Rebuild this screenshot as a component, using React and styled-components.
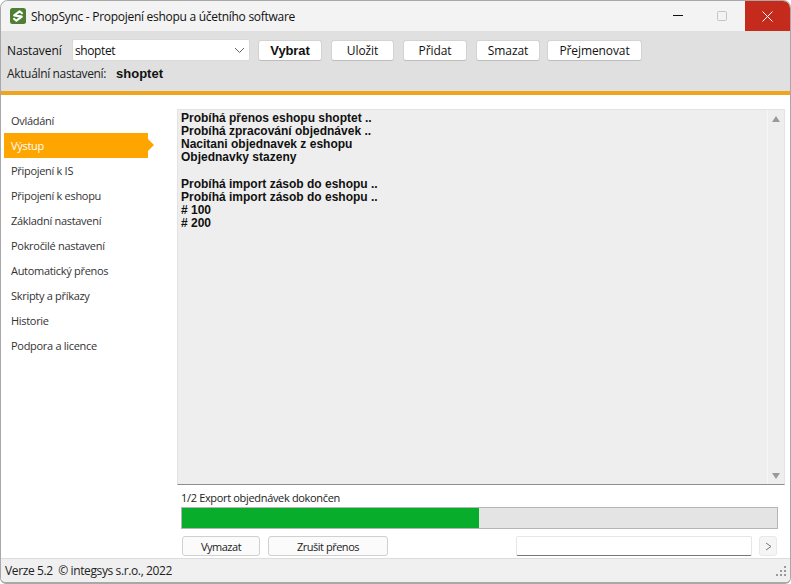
import React from "react";
import styled, { createGlobalStyle } from "styled-components";

const Global = createGlobalStyle`
  html, body { margin: 0; padding: 0; background: #fff; }
  body { font-family: "Open Sans", "Liberation Sans", sans-serif; font-size: 12px; color: #1a1a1a; }
  * { box-sizing: border-box; }
`;

const Window = styled.div`
  width: 791px; height: 584px; display: flex; flex-direction: column;
  border: 1px solid #a8a8a8; border-bottom-width: 2px; border-radius: 8px 8px 6px 6px; overflow: hidden; background: #fff;
`;
const TitleBar = styled.div`
  height: 30px; flex: none; background: #f3f3f3; display: flex; align-items: center; padding-left: 9px;
`;
const Logo = styled.svg`width: 16px; height: 16px; flex: none; margin-right: 5px;`;
const Title = styled.div`font-size: 12px; letter-spacing: -0.28px; color: #111; flex: 1; white-space: nowrap;`;
const WinButton = styled.div`
  width: 45px; height: 30px; display: flex; align-items: center; justify-content: center;
  padding-right: ${p => p.$pad || 0}px;
  background: ${p => (p.$close ? "#c42b1c" : "transparent")};
`;
const Toolbar = styled.div`
  height: 60px; flex: none; background: #e0e0e0; padding: 8px 0 0 6px; display: flex; flex-direction: column;
`;
const ToolRow = styled.div`display: flex; align-items: center; height: 22px;`;
const Label = styled.span`font-size: 12px; letter-spacing: -0.1px; color: #111; width: 65px; flex: none;`;
const Select = styled.div`
  width: 178px; height: 22px; background: #fff; border: 1px solid #d9d9d9; border-radius: 2px;
  display: flex; align-items: center; justify-content: space-between; padding: 0 4px 0 2px; font-size: 12px; letter-spacing: -0.4px; color: #111;
  margin-right: 8px;
`;
const ToolButton = styled.div`
  height: 21px; width: ${p => p.$w}px; margin-right: ${p => p.$gap}px; flex: none; background: #fff;
  border: 1px solid #d3d3d3; border-bottom-color: #bdbdbd; border-radius: 3px;
  display: flex; align-items: center; justify-content: center; color: #111;
  font-size: ${p => (p.$bold ? 13 : 12)}px;
  font-weight: ${p => (p.$bold ? 700 : 400)}; letter-spacing: -0.1px;
  font-family: ${p => (p.$bold ? '"Liberation Sans", sans-serif' : "inherit")};
`;
const Current = styled.div`display: flex; align-items: center; height: 22px; margin-top: 1px; font-size: 12px; letter-spacing: -0.35px; color: #222;`;
const CurrentValue = styled.b`font-family: "Liberation Sans", sans-serif; font-size: 13px; margin-left: 10px; color: #111; letter-spacing: 0;`;
const Accent = styled.div`height: 4px; flex: none; background: #f0a51e;`;
const Main = styled.div`flex: 1; display: flex; min-height: 0; background: #fff;`;
const Side = styled.div`width: 176px; flex: none; padding: 13px 0 0 3px;`;
const NavItem = styled.div`
  position: relative; width: 144px; height: 25px; display: flex; align-items: center; padding-left: 7px;
  font-size: 11px; letter-spacing: -0.3px; color: ${p => (p.$active ? "#fff" : "#333")};
  background: ${p => (p.$active ? "#ffa500" : "transparent")};
  ${p => p.$active && `&::after { content: ""; position: absolute; left: 144px; top: 6px;
    border-left: 6px solid #ffa500; border-top: 6px solid transparent; border-bottom: 6px solid transparent; }`}
`;
const Content = styled.div`flex: 1; display: flex; flex-direction: column; min-width: 0; padding: 14px 5px 0 0;`;
const Output = styled.div`
  height: 376px; flex: none; display: flex; background: #eeeeee;
  border: 1px solid #e3e3e3; border-bottom: 1px solid #8d8d8d; margin-bottom: 6px;
`;
const OutputText = styled.div`
  flex: 1; padding: 2px 3px; font-family: "Liberation Sans", sans-serif; font-weight: 700; font-size: 12px;
  line-height: 13px; color: #111; white-space: pre;
`;
const OutputBlock = styled.div`margin-bottom: 14px;`;
const Scroll = styled.div`
  width: 17px; flex: none; border-left: 1px solid #f6f6f6; display: flex; flex-direction: column;
  justify-content: space-between; align-items: center; padding: 6px 0 5px;
`;
const Arrow = styled.div`
  width: 0; height: 0; border-left: 4.5px solid transparent; border-right: 4.5px solid transparent;
  ${p => (p.$down ? "border-top: 6px solid #9a9a9a;" : "border-bottom: 6px solid #9a9a9a;")}
`;
const ProgressLabel = styled.div`height: 16px; font-size: 11px; line-height: 14px; letter-spacing: -0.33px; padding-left: 4px; color: #222;`;
const ProgressTrack = styled.div`
  height: 22px; width: 597px; margin-left: 4px; background: #e4e4e4; border: 1px solid #b5b5b5; flex: none;
`;
const ProgressFill = styled.div`height: 100%; background: #08ad2b;`;
const Controls = styled.div`display: flex; align-items: center; margin-top: 7px; padding-left: 5px; height: 20px;`;
const LowButton = styled.div`
  width: ${p => p.$w}px; margin-right: 8px; height: 20px; background: #fbfbfb; border: 1px solid #d0d0d0; border-radius: 3px;
  display: flex; align-items: center; justify-content: center; font-size: 11px; letter-spacing: -0.48px; color: #222; flex: none;
`;
const Input = styled.div`
  width: 236px; height: 20px; margin-left: 120px; background: #fff; border: 1px solid #e6e6e6; border-bottom: 1px solid #777; border-radius: 2px; flex: none;
`;
const NextButton = styled.div`
  width: 18px; height: 20px; margin-left: 7px; background: #f5f5f5; border: 1px solid #e8e8e8; border-radius: 3px;
  display: flex; align-items: center; justify-content: center; flex: none;
`;
const Status = styled.div`
  height: 24px; flex: none; background: #f0f0f0; border-top: 1px solid #dcdcdc; display: flex; align-items: center;
  justify-content: space-between; padding: 0 3px 0 4px; font-size: 12px; letter-spacing: -0.38px; color: #222;
`;
const StatusText = styled.span`white-space: pre;`;

const nav = ["Ovládání", "Výstup", "Připojení k IS", "Připojení k eshopu", "Základní nastavení", "Pokročilé nastavení", "Automatický přenos", "Skripty a příkazy", "Historie", "Podpora a licence"];
const blockA = `Probíhá přenos eshopu shoptet ..
Probíhá zpracování objednávek ..
Nacitani objednavek z eshopu
Objednavky stazeny`;
const blockB = `Probíhá import zásob do eshopu ..
Probíhá import zásob do eshopu ..
# 100
# 200`;

export default function App() {
  return (
    <>
      <Global />
      <Window>
        <TitleBar>
          <Logo viewBox="0 0 16 16">
            <rect width="16" height="16" rx="2.5" fill="#4f7f35" />
            <path d="M12 5.2 9.6 3.3 4.2 7.4 11.8 8.6 6.4 12.7 4 10.8" fill="none" stroke="#fff" strokeWidth="2.1" strokeLinejoin="round" strokeLinecap="round" />
          </Logo>
          <Title>ShopSync - Propojení eshopu a účetního software</Title>
          <WinButton>
            <svg width="10" height="10" viewBox="0 0 10 10"><path d="M0 4.5h10" stroke="#111" strokeWidth="1" /></svg>
          </WinButton>
          <WinButton $pad={2}>
            <svg width="10" height="10" viewBox="0 0 10 10"><rect x=".5" y=".5" width="9" height="9" rx="1" fill="none" stroke="#c4c4c4" /></svg>
          </WinButton>
          <WinButton $close>
            <svg width="11" height="11" viewBox="0 0 11 11"><path d="M.5.5l10 10M10.5.5l-10 10" stroke="#fff" strokeWidth="1" /></svg>
          </WinButton>
        </TitleBar>
        <Toolbar>
          <ToolRow>
            <Label>Nastavení</Label>
            <Select>
              shoptet
              <svg width="11" height="7" viewBox="0 0 11 7"><path d="M1 1l4.5 4.5L10 1" fill="none" stroke="#666" /></svg>
            </Select>
            <ToolButton $w={64} $gap={9} $bold>Vybrat</ToolButton>
            <ToolButton $w={63} $gap={9}>Uložit</ToolButton>
            <ToolButton $w={64} $gap={9}>Přidat</ToolButton>
            <ToolButton $w={64} $gap={7}>Smazat</ToolButton>
            <ToolButton $w={95} $gap={0}>Přejmenovat</ToolButton>
          </ToolRow>
          <Current>Aktuální nastavení:<CurrentValue>shoptet</CurrentValue></Current>
        </Toolbar>
        <Accent />
        <Main>
          <Side>
            {nav.map(n => <NavItem key={n} $active={n === "Výstup"}>{n}</NavItem>)}
          </Side>
          <Content>
            <Output>
              <OutputText>
                <OutputBlock>{blockA}</OutputBlock>
                <OutputBlock>{blockB}</OutputBlock>
              </OutputText>
              <Scroll><Arrow /><Arrow $down /></Scroll>
            </Output>
            <ProgressLabel>1/2 Export objednávek dokončen</ProgressLabel>
            <ProgressTrack><ProgressFill style={{ width: "49.9%" }} /></ProgressTrack>
            <Controls>
              <LowButton $w={78}>Vymazat</LowButton>
              <LowButton $w={120}>Zrušit přenos</LowButton>
              <Input />
              <NextButton>
                <svg width="7" height="9" viewBox="0 0 7 9"><path d="M1 1l5 3.5L1 8" fill="none" stroke="#777" /></svg>
              </NextButton>
            </Controls>
          </Content>
        </Main>
        <Status>
          <StatusText>Verze 5.2  © integsys s.r.o., 2022</StatusText>
          <svg width="12" height="12" viewBox="0 0 12 12" fill="#9a9a9a">
            <rect x="9" y="1" width="2" height="2" /><rect x="5" y="5" width="2" height="2" /><rect x="9" y="5" width="2" height="2" />
            <rect x="1" y="9" width="2" height="2" /><rect x="5" y="9" width="2" height="2" /><rect x="9" y="9" width="2" height="2" />
          </svg>
        </Status>
      </Window>
    </>
  );
}
